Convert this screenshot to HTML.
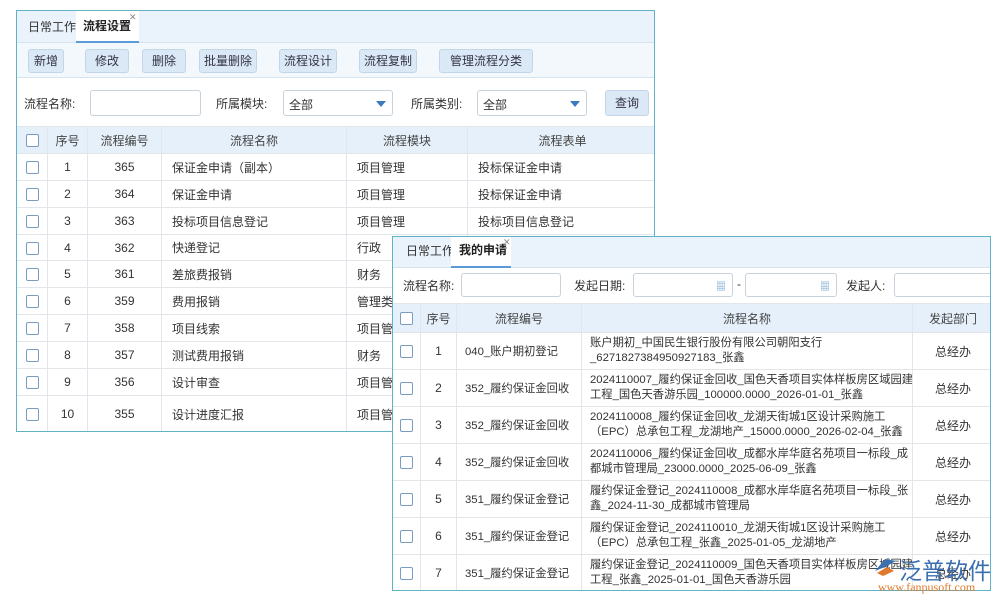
<!DOCTYPE html><html><head><meta charset="utf-8"><style>
*{box-sizing:border-box;margin:0;padding:0}
body{width:1000px;height:600px;background:#fff;font-family:"Liberation Sans","Noto Sans CJK SC",sans-serif;font-size:12px;color:#333;position:relative;overflow:hidden}
.p{position:absolute;border:1px solid #5fb3c4;background:#fff;overflow:hidden}
.tabs{position:absolute;left:0;right:0;top:0;background:#eaf3fb;border-bottom:1px solid #d6e4f0}
.tab{position:absolute;top:0;font-size:12px;white-space:nowrap}
.tab.a{background:#fff;border-bottom:2px solid #5b9bd5;font-weight:bold;color:#222}
.x{position:absolute;font-size:9px;color:#888;font-weight:normal}
.btn{position:absolute;top:6px;height:24px;background:#dbe9f6;border:1px solid #c3d6e8;border-radius:3px;text-align:center;line-height:22px;color:#334}
.inp{position:absolute;border:1px solid #c8d2dc;border-radius:3px;background:#fff}
.lbl{position:absolute}
table{position:absolute;border-collapse:collapse;table-layout:fixed}
td,th{border:1px solid #e2e6ea;font-weight:normal;overflow:hidden;white-space:nowrap}
th{background:#e6f0fa;color:#444;text-align:center}
td.c{text-align:center}
td.l{padding-left:10px}
.w td.l{font-size:11.3px;padding-left:8px}
.cb{display:inline-block;width:13px;height:13px;border:1px solid #7a9cc0;border-radius:2px;background:#fff;vertical-align:middle}
.arr{position:absolute;width:0;height:0;border-left:5px solid transparent;border-right:5px solid transparent;border-top:6px solid #3a7bc0}
</style></head><body>

<div class="p" style="left:16px;top:10px;width:639px;height:422px">
 <div class="tabs" style="height:32px">
  <div class="tab" style="left:11px;top:7px">日常工作</div>
  <div class="tab a" style="left:59px;width:63px;height:32px;padding:6px 0 0 7px">流程设置<span class="x" style="left:53px;top:1px">✕</span></div>
 </div>
 <div style="position:absolute;left:0;right:0;top:32px;height:35px;background:#f3f8fc;border-bottom:1px solid #d6e4f0">
  <div class="btn" style="left:11px;width:36px">新增</div>
  <div class="btn" style="left:68px;width:44px">修改</div>
  <div class="btn" style="left:125px;width:44px">删除</div>
  <div class="btn" style="left:182px;width:58px">批量删除</div>
  <div class="btn" style="left:262px;width:58px">流程设计</div>
  <div class="btn" style="left:342px;width:58px">流程复制</div>
  <div class="btn" style="left:422px;width:94px">管理流程分类</div>
 </div>
 <div class="lbl" style="left:7px;top:84px">流程名称:</div>
 <div class="inp" style="left:73px;top:79px;width:111px;height:26px"></div>
 <div class="lbl" style="left:199px;top:84px">所属模块:</div>
 <div class="inp" style="left:266px;top:79px;width:110px;height:26px;padding:5px 0 0 5px">全部<div class="arr" style="left:92px;top:10px"></div></div>
 <div class="lbl" style="left:394px;top:84px">所属类别:</div>
 <div class="inp" style="left:460px;top:79px;width:110px;height:26px;padding:5px 0 0 5px">全部<div class="arr" style="left:92px;top:10px"></div></div>
 <div class="btn" style="left:588px;top:79px;width:44px;height:26px;line-height:24px">查询</div>
 <table style="left:-1px;top:115px;width:641px">
  <colgroup><col style="width:31px"><col style="width:40px"><col style="width:74px"><col style="width:185px"><col style="width:121px"><col style="width:190px"></colgroup>
  <tr style="height:27px"><th><span class="cb"></span></th><th>序号</th><th>流程编号</th><th>流程名称</th><th>流程模块</th><th>流程表单</th></tr>
  <tr style="height:27px"><td class="c"><span class="cb"></span></td><td class="c">1</td><td class="c">365</td><td class="l">保证金申请（副本）</td><td class="l">项目管理</td><td class="l">投标保证金申请</td></tr>
  <tr style="height:27px"><td class="c"><span class="cb"></span></td><td class="c">2</td><td class="c">364</td><td class="l">保证金申请</td><td class="l">项目管理</td><td class="l">投标保证金申请</td></tr>
  <tr style="height:27px"><td class="c"><span class="cb"></span></td><td class="c">3</td><td class="c">363</td><td class="l">投标项目信息登记</td><td class="l">项目管理</td><td class="l">投标项目信息登记</td></tr>
  <tr style="height:26px"><td class="c"><span class="cb"></span></td><td class="c">4</td><td class="c">362</td><td class="l">快递登记</td><td class="l">行政</td><td class="l"></td></tr>
  <tr style="height:27px"><td class="c"><span class="cb"></span></td><td class="c">5</td><td class="c">361</td><td class="l">差旅费报销</td><td class="l">财务</td><td class="l"></td></tr>
  <tr style="height:27px"><td class="c"><span class="cb"></span></td><td class="c">6</td><td class="c">359</td><td class="l">费用报销</td><td class="l">管理类</td><td class="l"></td></tr>
  <tr style="height:27px"><td class="c"><span class="cb"></span></td><td class="c">7</td><td class="c">358</td><td class="l">项目线索</td><td class="l">项目管理</td><td class="l"></td></tr>
  <tr style="height:27px"><td class="c"><span class="cb"></span></td><td class="c">8</td><td class="c">357</td><td class="l">测试费用报销</td><td class="l">财务</td><td class="l"></td></tr>
  <tr style="height:27px"><td class="c"><span class="cb"></span></td><td class="c">9</td><td class="c">356</td><td class="l">设计审查</td><td class="l">项目管理</td><td class="l"></td></tr>
  <tr style="height:37px"><td class="c"><span class="cb"></span></td><td class="c">10</td><td class="c">355</td><td class="l">设计进度汇报</td><td class="l">项目管理</td><td class="l"></td></tr>
 </table>
</div>

<div class="p" style="left:392px;top:236px;width:599px;height:355px">
 <div class="tabs" style="height:31px">
  <div class="tab" style="left:13px;top:5px">日常工作</div>
  <div class="tab a" style="left:58px;width:60px;height:31px;padding:4px 0 0 8px">我的申请<span class="x" style="left:52px;top:0px">✕</span></div>
 </div>
 <div class="lbl" style="left:10px;top:40px">流程名称:</div>
 <div class="inp" style="left:68px;top:36px;width:100px;height:24px"></div>
 <div class="lbl" style="left:181px;top:40px">发起日期:</div>
 <div class="inp" style="left:240px;top:36px;width:100px;height:24px"><span style="position:absolute;right:6px;top:4px;color:#6aa0d0;font-size:10px">▦</span></div>
 <div class="lbl" style="left:344px;top:40px">-</div>
 <div class="inp" style="left:352px;top:36px;width:92px;height:24px"><span style="position:absolute;right:6px;top:4px;color:#6aa0d0;font-size:10px">▦</span></div>
 <div class="lbl" style="left:453px;top:40px">发起人:</div>
 <div class="inp" style="left:501px;top:36px;width:110px;height:24px"></div>
 <table class="w" style="left:-1px;top:66px;width:601px">
  <colgroup><col style="width:28px"><col style="width:36px"><col style="width:125px"><col style="width:331px"><col style="width:81px"></colgroup>
  <tr style="height:29px"><th><span class="cb"></span></th><th>序号</th><th>流程编号</th><th>流程名称</th><th>发起部门</th></tr>
  <tr style="height:37px"><td class="c"><span class="cb"></span></td><td class="c">1</td><td class="l">040_账户期初登记</td><td class="l" style="line-height:15px">账户期初_中国民生银行股份有限公司朝阳支行<br>_6271827384950927183_张鑫</td><td class="c">总经办</td></tr>
  <tr style="height:37px"><td class="c"><span class="cb"></span></td><td class="c">2</td><td class="l">352_履约保证金回收</td><td class="l" style="line-height:15px">2024110007_履约保证金回收_国色天香项目实体样板房区域园建<br>工程_国色天香游乐园_100000.0000_2026-01-01_张鑫</td><td class="c">总经办</td></tr>
  <tr style="height:37px"><td class="c"><span class="cb"></span></td><td class="c">3</td><td class="l">352_履约保证金回收</td><td class="l" style="line-height:15px">2024110008_履约保证金回收_龙湖天街城1区设计采购施工<br>（EPC）总承包工程_龙湖地产_15000.0000_2026-02-04_张鑫</td><td class="c">总经办</td></tr>
  <tr style="height:37px"><td class="c"><span class="cb"></span></td><td class="c">4</td><td class="l">352_履约保证金回收</td><td class="l" style="line-height:15px">2024110006_履约保证金回收_成都水岸华庭名苑项目一标段_成<br>都城市管理局_23000.0000_2025-06-09_张鑫</td><td class="c">总经办</td></tr>
  <tr style="height:37px"><td class="c"><span class="cb"></span></td><td class="c">5</td><td class="l">351_履约保证金登记</td><td class="l" style="line-height:15px">履约保证金登记_2024110008_成都水岸华庭名苑项目一标段_张<br>鑫_2024-11-30_成都城市管理局</td><td class="c">总经办</td></tr>
  <tr style="height:37px"><td class="c"><span class="cb"></span></td><td class="c">6</td><td class="l">351_履约保证金登记</td><td class="l" style="line-height:15px">履约保证金登记_2024110010_龙湖天街城1区设计采购施工<br>（EPC）总承包工程_张鑫_2025-01-05_龙湖地产</td><td class="c">总经办</td></tr>
  <tr style="height:37px"><td class="c"><span class="cb"></span></td><td class="c">7</td><td class="l">351_履约保证金登记</td><td class="l" style="line-height:15px">履约保证金登记_2024110009_国色天香项目实体样板房区域园建<br>工程_张鑫_2025-01-01_国色天香游乐园</td><td class="c">总经办</td></tr>
 </table>
</div>

<div style="position:absolute;left:872px;top:553px;width:125px;height:40px">
 <svg style="position:absolute;left:0;top:3px" width="26" height="22" viewBox="0 0 26 22"><path d="M3 15 L13 3 L24 5 L13 11 Z" fill="#3a6fb0"/><path d="M5 17 L15 11 L22 15 L11 20 Z" fill="#e07a2e"/></svg>
 <div style="position:absolute;left:27px;top:-1px;font-size:23px;color:#3a6fb0;letter-spacing:0px;white-space:nowrap">泛普软件</div>
 <div style="position:absolute;left:6px;top:27px;font-size:12px;color:#e07a2e;font-family:'Liberation Serif',serif;white-space:nowrap">www.fanpusoft.com</div>
</div>
</body></html>
